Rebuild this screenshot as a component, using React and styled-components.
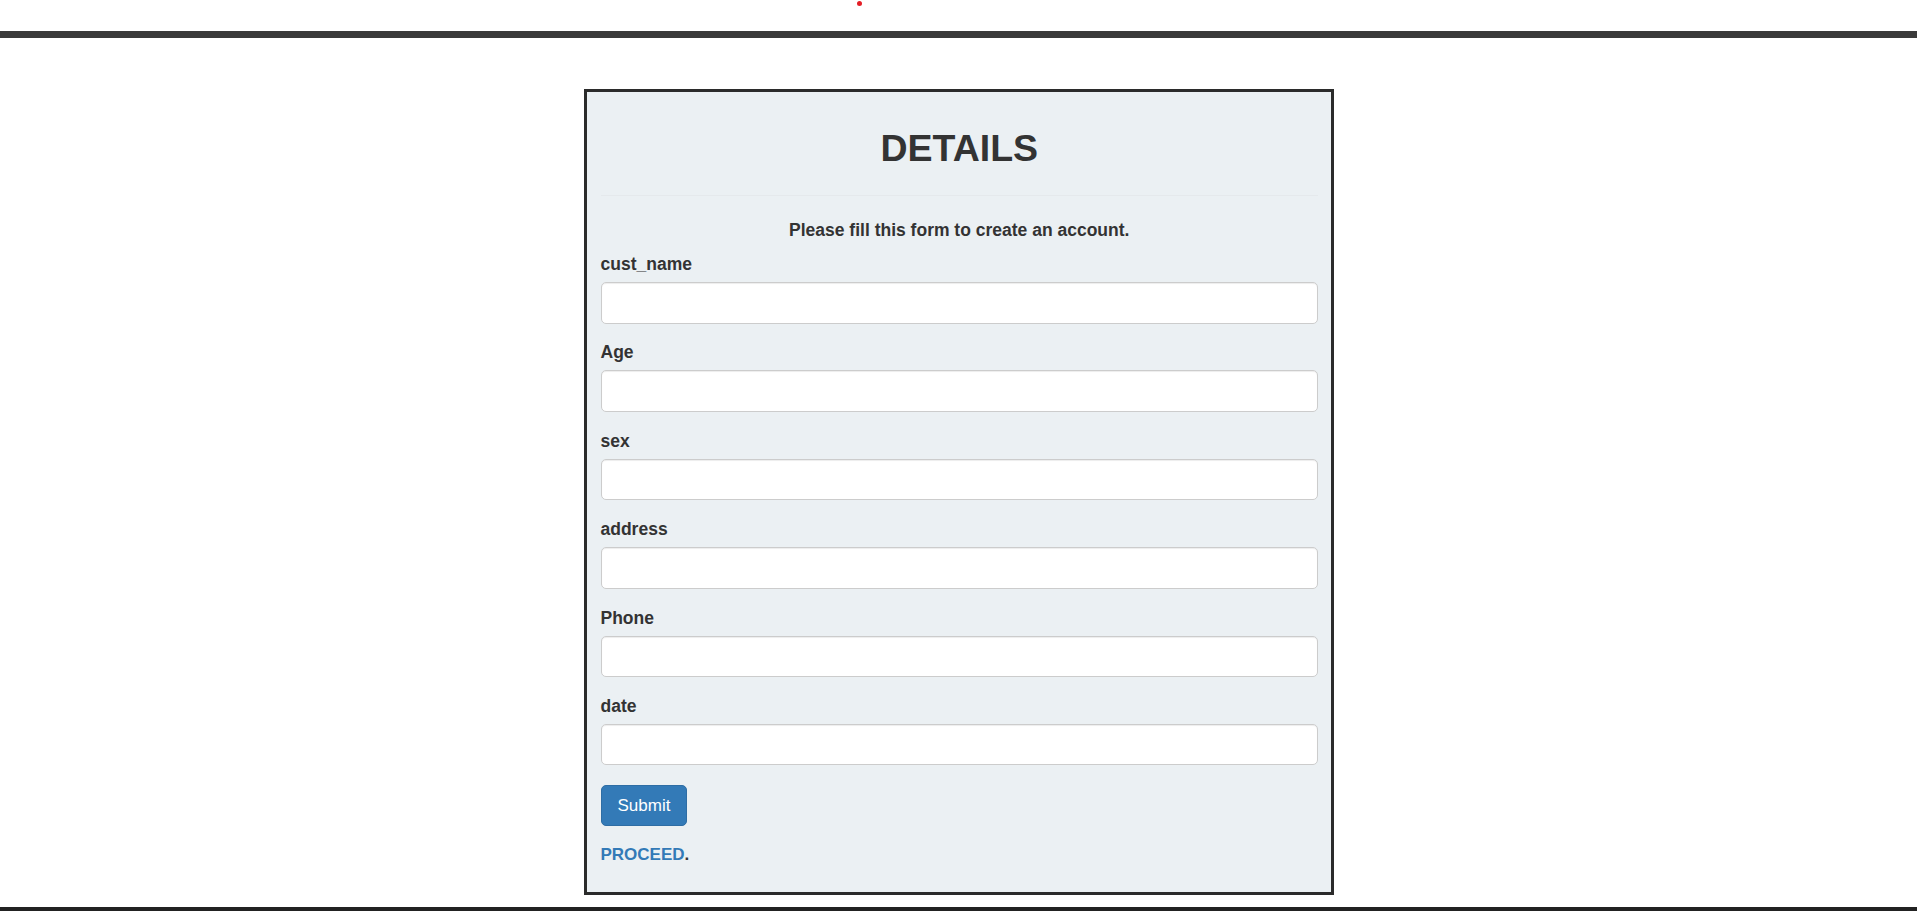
import React from "react";
import styled, { createGlobalStyle } from "styled-components";

const GlobalStyle = createGlobalStyle`
  html, body {
    margin: 0;
    padding: 0;
    background: #ffffff;
    overflow: hidden;
  }
  body {
    font-family: "Liberation Sans", Arial, Helvetica, sans-serif;
    color: #333333;
  }
  * { box-sizing: border-box; }
`;

const Page = styled.div`
  display: flex;
  flex-direction: column;
  min-height: 911px;
`;

const TopArea = styled.div`
  height: 31px;
  display: flex;
  align-items: flex-start;
  padding-left: 856.5px;
  padding-top: 0.5px;
`;

const Dot = styled.span`
  width: 5px;
  height: 5px;
  border-radius: 50%;
  background: #e41e26;
`;

const TopBar = styled.div`
  height: 7px;
  background: #3a3a3a;
`;

const Main = styled.main`
  padding-top: 51px;
  display: flex;
  justify-content: center;
`;

const Card = styled.section`
  width: 750px;
  margin-left: 1px;
  border: 3px solid #2b2b2b;
  background: #ebf0f3;
  padding: 0 13px 24.5px 13.5px;
`;

const Heading = styled.h2`
  margin: 36px 0 0;
  font-size: 37.5px;
  line-height: 40px;
  font-weight: 700;
  text-align: center;
  color: #333333;
`;

const Rule = styled.hr`
  margin: 27px 0 0;
  border: 0;
  border-top: 1px solid #e5e9ec;
`;

const Subtitle = styled.p`
  margin: 21.5px 0 0;
  font-size: 17.5px;
  line-height: 25px;
  font-weight: 700;
  text-align: center;
`;

const Form = styled.form`
  margin-top: 9.5px;
  display: flex;
  flex-direction: column;
`;

const Group = styled.div`
  display: flex;
  flex-direction: column;
  margin-bottom: 16.9px;
`;

const Label = styled.label`
  font-size: 17.5px;
  line-height: 24px;
  font-weight: 700;
  margin-bottom: 6px;
`;

const Input = styled.input`
  height: 41.5px;
  width: 100%;
  border: 1px solid #cccccc;
  border-radius: 5px;
  background: #ffffff;
  box-shadow: inset 0 1px 1px rgba(0, 0, 0, 0.075);
  padding: 0 14px;
  font-family: inherit;
  font-size: 17px;
  color: #555555;
  outline: none;
`;

const SubmitButton = styled.button`
  align-self: flex-start;
  margin-top: 2.6px;
  height: 41.5px;
  padding: 0 16px;
  border: 1px solid #2e6da4;
  border-radius: 5px;
  background: #337ab7;
  color: #ffffff;
  font-family: inherit;
  font-size: 17px;
  cursor: pointer;
`;

const Note = styled.p`
  margin: 17px 0 0;
  font-size: 17px;
  line-height: 24px;
  font-weight: 700;
`;

const Link = styled.a`
  color: #337ab7;
  text-decoration: none;
`;

const Spacer = styled.div`
  flex: 1;
`;

const BottomBar = styled.div`
  height: 4px;
  background: #222222;
`;

const fields = ["cust_name", "Age", "sex", "address", "Phone", "date"];

export default function App() {
  return (
    <>
      <GlobalStyle />
      <Page>
        <TopArea>
          <Dot />
        </TopArea>
        <TopBar />
        <Main>
          <Card>
            <Heading>DETAILS</Heading>
            <Rule />
            <Subtitle>Please fill this form to create an account.</Subtitle>
            <Form onSubmit={(e) => e.preventDefault()}>
              {fields.map((f) => (
                <Group key={f}>
                  <Label htmlFor={f}>{f}</Label>
                  <Input id={f} name={f} type="text" />
                </Group>
              ))}
              <SubmitButton type="submit">Submit</SubmitButton>
            </Form>
            <Note>
              <Link href="#">PROCEED</Link>.
            </Note>
          </Card>
        </Main>
        <Spacer />
        <BottomBar />
      </Page>
    </>
  );
}
